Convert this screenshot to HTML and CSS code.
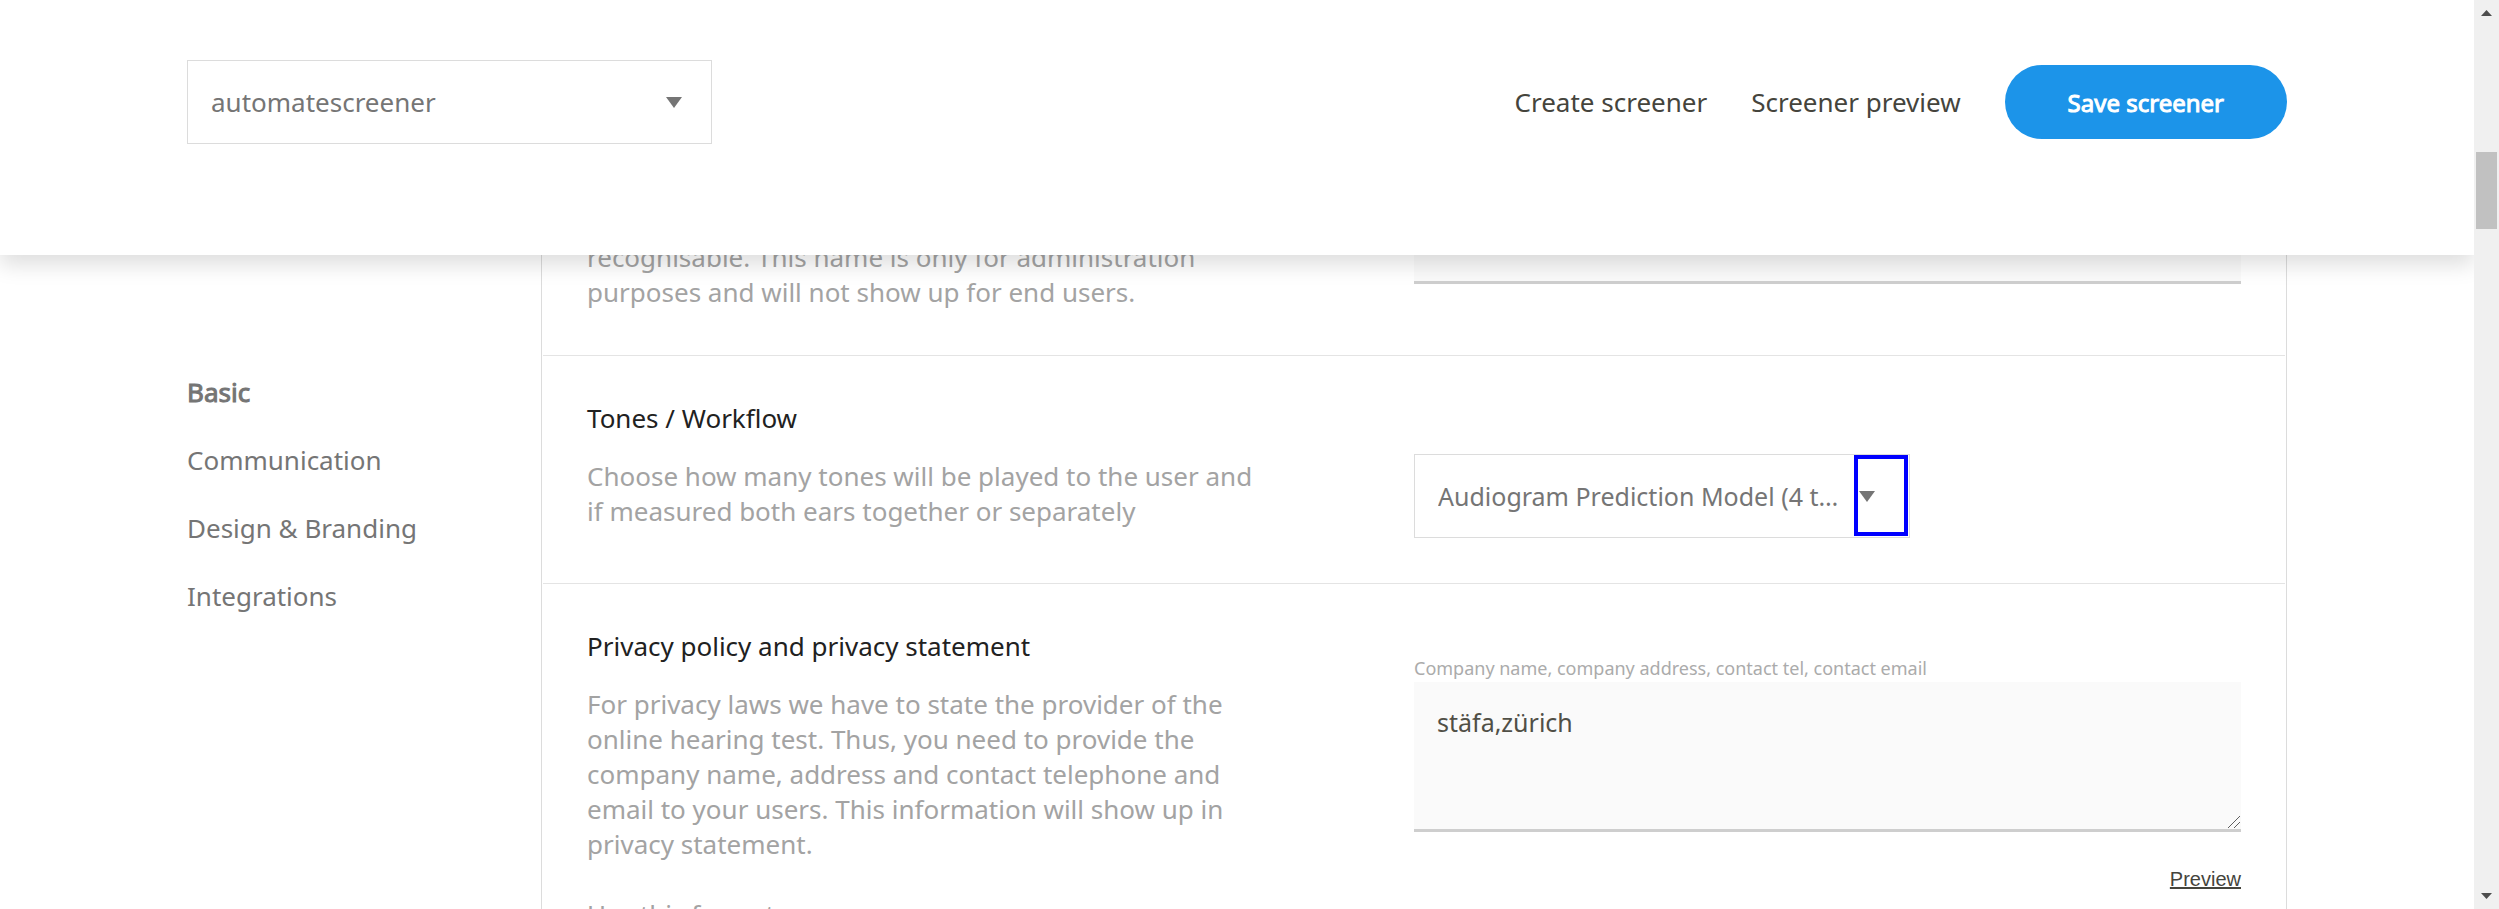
FILE: index.html
```html
<!DOCTYPE html>
<html lang="en">
<head>
<meta charset="utf-8">
<title>Screener settings</title>
<link rel="stylesheet" href="styles.css">
</head>
<body>
<div class="page">
  <header class="header">
    <div class="container header-inner">
      <div class="dropdown dropdown-screener">
        <select class="dropdown-select" aria-label="Screener">
          <option>automatescreener</option>
        </select>
        <svg class="dropdown-arrow" viewBox="0 0 16 11" aria-hidden="true"><path d="M0 0H16L8 11Z"/></svg>
      </div>
      <div class="actions">
        <a class="action-link" href="#create">Create screener</a>
        <a class="action-link" href="#preview">Screener preview</a>
        <button class="save" type="button">Save screener</button>
      </div>
    </div>
  </header>
  <main class="container main">
    <nav class="nav">
      <a class="nav-link active" href="#basic">Basic</a>
      <a class="nav-link" href="#communication">Communication</a>
      <a class="nav-link" href="#design">Design &amp; Branding</a>
      <a class="nav-link" href="#integrations">Integrations</a>
    </nav>
    <div class="card">
      <section class="row row-name">
        <div class="info">
          <p class="desc">recognisable. This name is only for administration purposes and will not show up for end users.</p>
        </div>
        <div class="field">
          <input class="text-input" type="text" aria-label="Name">
        </div>
      </section>
      <section class="row">
        <div class="info">
          <h2 class="title">Tones / Workflow</h2>
          <p class="desc">Choose how many tones will be played to the user and if measured both ears together or separately</p>
        </div>
        <div class="field field-select">
          <div class="dropdown dropdown-tones">
            <select class="dropdown-select" aria-label="Tones / Workflow">
              <option>Audiogram Prediction Model (4 tones)</option>
            </select>
            <svg class="dropdown-arrow" viewBox="0 0 16 11" aria-hidden="true"><path d="M0 0H16L8 11Z"/></svg>
            <span class="highlight"></span>
          </div>
        </div>
      </section>
      <section class="row">
        <div class="info">
          <h2 class="title">Privacy policy and privacy statement</h2>
          <p class="desc">For privacy laws we have to state the provider of the online hearing test. Thus, you need to provide the company name, address and contact telephone and email to your users. This information will show up in privacy statement.</p>
          <p class="desc desc-next">Use this format</p>
        </div>
        <div class="field field-text">
          <label class="label" for="company">Company name, company address, contact tel, contact email</label>
          <div class="textarea-wrap">
            <textarea class="textarea" id="company">stäfa,zürich</textarea>
            <svg class="grip" viewBox="0 0 12 12" aria-hidden="true"><path d="M0 12L12 0M6 12L12 6"/></svg>
          </div>
          <a class="preview" href="#privacy-preview">Preview</a>
        </div>
      </section>
    </div>
  </main>
</div>
<div class="scrollbar" aria-hidden="true">
  <svg class="scroll-arrow" viewBox="0 0 11 6"><path d="M0 6H11L5.500 0Z"/></svg>
  <div class="track"><div class="thumb"></div></div>
  <svg class="scroll-arrow" viewBox="0 0 11 6"><path d="M0 0H11L5.500 6Z"/></svg>
</div>
</body>
</html>
```
FILE: styles.css
```css
* {
  box-sizing: border-box;
}

body {
  margin: 0;
  height: 100vh;
  overflow: hidden;
  display: grid;
  grid-template-columns: minmax(0, 1fr) 25px;
  background: #fff;
  color: #757575;
  font: 26px/35px "Noto Sans", sans-serif;
}

a {
  color: inherit;
  text-decoration: none;
}

h2,
p {
  margin: 0;
  font-size: inherit;
  font-weight: 400;
}

.page {
  height: 100vh;
  overflow: hidden;
}

.container {
  max-width: 2100px;
  margin: 0 auto;
}

/* Header */
.header {
  position: relative;
  z-index: 2;
  height: 255px;
  padding-top: 60px;
  background: #fff;
  box-shadow: 0 10px 20px rgba(0, 0, 0, 0.13);
}

.header-inner {
  display: flex;
  align-items: center;
  justify-content: space-between;
}

.actions {
  display: flex;
  align-items: center;
  gap: 44px;
  color: #45443c;
}

.save {
  padding: 20px 63px 19px;
  border: 0;
  border-radius: 37px;
  background: #1c94e9;
  color: #fff;
  font: inherit;
  font-size: 24px;
  -webkit-text-stroke: 1px currentColor;
}

/* Drop-downs */
.dropdown {
  position: relative;
}

.dropdown-screener {
  width: 25%;
}

.dropdown-tones {
  width: 60%;
}

.dropdown-select {
  display: block;
  width: 100%;
  height: 84px;
  padding: 0 60px 0 23px;
  appearance: none;
  border: 1px solid #dcdcdc;
  border-radius: 0;
  background: #fff;
  color: #757575;
  font: inherit;
  text-overflow: ellipsis;
}

.dropdown-tones .dropdown-select {
  font-size: 25px;
}

.dropdown-arrow {
  position: absolute;
  top: 37px;
  right: 30px;
  width: 16px;
  height: 11px;
  fill: #757575;
  pointer-events: none;
}

.dropdown-tones .dropdown-arrow {
  right: 35px;
}

.highlight {
  position: absolute;
  top: 1px;
  right: 2px;
  width: 54px;
  height: 81px;
  border: 4px solid #00f;
  pointer-events: none;
}

/* Body */
.main {
  display: flex;
}

.nav {
  flex: 0 0 354px;
  display: flex;
  flex-direction: column;
  gap: 33px;
  padding-top: 120px;
}

.active {
  -webkit-text-stroke: 1px currentColor;
}

.card {
  flex: 1;
  min-width: 0;
  margin-top: -15px;
  border: solid #dcdcdc;
  border-width: 0 1px;
}

.row {
  display: grid;
  grid-template-columns: 1fr 1fr;
  margin: 0 1px;
  padding: 45px 44px;
}

.row + .row {
  border-top: 1px solid #e4e4e4;
}

.row-name {
  padding-top: 0;
}

.info {
  width: 82%;
}

.title {
  margin-bottom: 23px;
  color: #212121;
}

.desc {
  color: #a3a3a3;
}

.desc-next {
  margin-top: 35px;
}

.text-input {
  display: block;
  width: 100%;
  height: 44px;
  padding: 0 23px;
  border: 0;
  border-bottom: 3px solid #cecece;
  background: #fafafa;
  font: inherit;
}

.field-select {
  padding-top: 53px;
}

.field-text {
  display: flex;
  flex-direction: column;
  padding-top: 26px;
}

.label {
  padding-bottom: 1px;
  color: #ababab;
  font-size: 18px;
  line-height: 26px;
}

.textarea-wrap {
  position: relative;
}

.textarea {
  display: block;
  width: 100%;
  height: 150px;
  padding: 23px;
  border: 0;
  border-bottom: 3px solid #cecece;
  background: #fafafa;
  color: #504f46;
  font: inherit;
  font-size: 25px;
  resize: none;
}

.grip {
  position: absolute;
  right: 1px;
  bottom: 4px;
  width: 12px;
  height: 12px;
  fill: none;
  stroke: #5f5f5f;
  pointer-events: none;
}

.preview {
  align-self: flex-end;
  margin-top: 33px;
  color: #45443c;
  font: 20px/28px "Liberation Sans", Arial, sans-serif;
  text-decoration: underline;
  text-decoration-thickness: 2px;
}

/* Scrollbar */
.scrollbar {
  position: relative;
  z-index: 3;
  display: flex;
  flex-direction: column;
  align-items: center;
  gap: 10px;
  padding: 10px 2px;
  background: #f0f0f0;
}

.scroll-arrow {
  width: 11px;
  height: 6px;
  fill: #4d4d4d;
}

.track {
  flex: 1;
  align-self: stretch;
  padding-top: 126px;
}

.thumb {
  height: 77px;
  background: #c1c1c1;
}
```
